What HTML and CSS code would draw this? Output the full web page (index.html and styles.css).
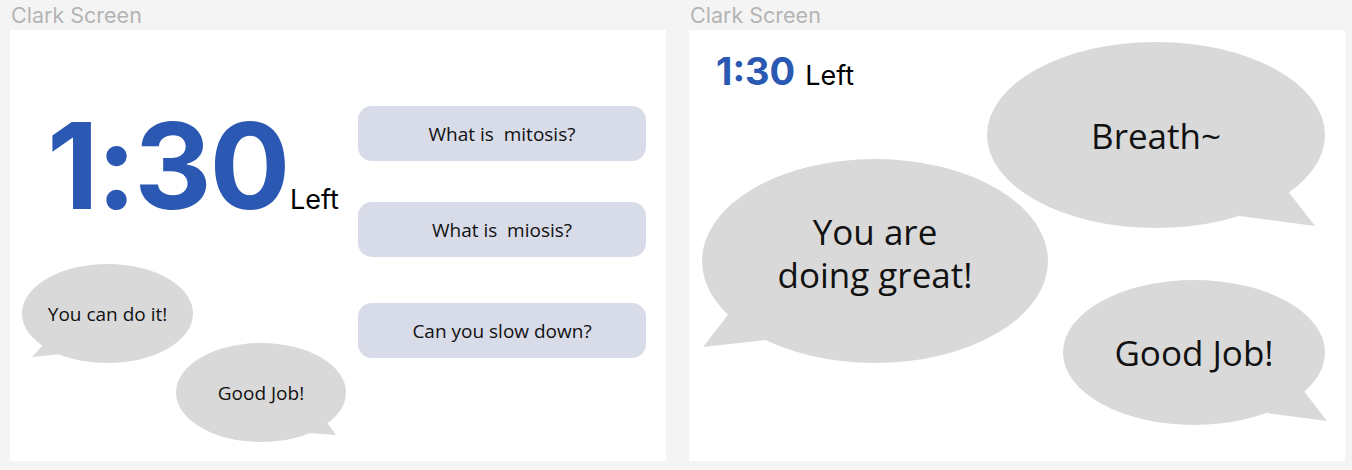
FILE: index.html
```html
<!DOCTYPE html>
<html>
<head>
<meta charset="utf-8">
<link rel="stylesheet" href="styles.css">
</head>
<body>
<div class="board">
  <section class="screen">
    <div class="label">Clark Screen</div>
    <div class="panel panel-a">
      <div class="timer">
        <span class="time">1:30</span><span class="left">Left</span>
      </div>
      <div class="questions">
        <button class="q">What is&nbsp; mitosis?</button>
        <button class="q">What is&nbsp; miosis?</button>
        <button class="q q-last">Can you slow down?</button>
      </div>

      <div class="bubble b-cando">
        <svg viewBox="0 0 171 99" width="171" height="99"><ellipse cx="85.5" cy="49.5" rx="85.5" ry="49.5"/><polygon points="10,93 22,80 40,90"/></svg>
        <span class="btext small">You can do it!</span>
      </div>
      <div class="bubble b-good-a">
        <svg viewBox="0 0 170 99" width="170" height="99"><ellipse cx="85" cy="49.5" rx="85" ry="49.5"/><polygon points="160,92 150,78 132,90"/></svg>
        <span class="btext small">Good Job!</span>
      </div>
    </div>
  </section>

  <section class="screen">
    <div class="label">Clark Screen</div>
    <div class="panel panel-b">
      <div class="timer-sm">
        <span class="time-sm">1:30</span><span class="left-sm">Left</span>
      </div>

      <div class="bubble b-breath">
        <svg viewBox="0 0 338 186" width="338" height="186"><ellipse cx="169" cy="93" rx="169" ry="93"/><polygon points="328,184 300,148 252,174"/></svg>
        <span class="btext big">Breath~</span>
      </div>
      <div class="bubble b-great">
        <svg viewBox="0 0 346 204" width="346" height="204"><ellipse cx="173" cy="102" rx="173" ry="102"/><polygon points="1,188 29,152 64,181"/></svg>
        <span class="btext big two">You are<br>doing great!</span>
      </div>
      <div class="bubble b-good-b">
        <svg viewBox="0 0 262 145" width="262" height="145"><ellipse cx="131" cy="72.5" rx="131" ry="72.5"/><polygon points="264,141 240,110 204,133"/></svg>
        <span class="btext big">Good Job!</span>
      </div>
    </div>
  </section>
</div>
</body>
</html>
```

FILE: styles.css
```css
html, body {
  margin: 0;
  padding: 0;
}
body {
  background: #f4f4f4;
  width: 1352px;
  height: 470px;
  overflow: hidden;
  font-family: "Open Sans", "Noto Sans", sans-serif;
}
.board {
  display: flex;
  gap: 23px;
  padding-left: 10px;
}
.screen {
  display: flex;
  flex-direction: column;
}
.label {
  height: 30px;
  line-height: 30px;
  font-family: Inter, "Liberation Sans", sans-serif;
  font-size: 21.5px;
  color: #b4b4b4;
  padding-left: 1px;
}
.panel {
  position: relative;
  width: 656px;
  height: 431px;
  background: #ffffff;
}
.panel-a {
  display: flex;
  justify-content: space-between;
}

/* big timer */
.timer {
  font-family: Inter, "Liberation Sans", sans-serif;
  padding-left: 37px;
  padding-top: 46px;
  line-height: 180px;
  height: 180px;
}
.time {
  font-size: 120px;
  font-weight: 700;
  color: #2a58b2;
  letter-spacing: -2.3px;
}
.left {
  font-size: 27px;
  font-weight: 400;
  color: #000;
  margin-left: 2px;
}

/* question buttons */
.questions {
  display: flex;
  flex-direction: column;
  gap: 41px;
  width: 288px;
  margin-right: 20px;
  padding-top: 76px;
}
.q {
  height: 55px;
  border: none;
  border-radius: 14px;
  background: #d8dbe8;
  font-family: "Open Sans", "Noto Sans", sans-serif;
  font-size: 19px;
  color: #111;
  padding: 0;
}
.q-last {
  margin-top: 5px;
}

/* small timer */
.timer-sm {
  font-family: Inter, "Liberation Sans", sans-serif;
  padding-left: 27px;
  padding-top: 13px;
  line-height: 56px;
  height: 56px;
}
.time-sm {
  font-size: 38px;
  font-weight: 700;
  color: #2a58b2;
}
.left-sm {
  font-size: 27px;
  color: #000;
  margin-left: 10px;
}

/* speech bubbles (free canvas placement) */
.bubble {
  position: absolute;
  display: flex;
  align-items: center;
  justify-content: center;
  text-align: center;
}
.bubble svg {
  position: absolute;
  left: 0;
  top: 0;
  overflow: visible;
  fill: #d9d9d9;
}
.btext {
  position: relative;
  color: #111;
}
.small {
  font-size: 19px;
}
.big {
  font-size: 35px;
}
.two {
  line-height: 43px;
  margin-bottom: 16px;
}
.b-cando  { left: 12px;  top: 234px; width: 171px; height: 99px; }
.b-good-a { left: 166px; top: 313px; width: 170px; height: 99px; }
.b-breath { left: 298px; top: 12px;  width: 338px; height: 186px; }
.b-great  { left: 13px;  top: 129px; width: 346px; height: 204px; }
.b-good-b { left: 374px; top: 250px; width: 262px; height: 145px; }
```
